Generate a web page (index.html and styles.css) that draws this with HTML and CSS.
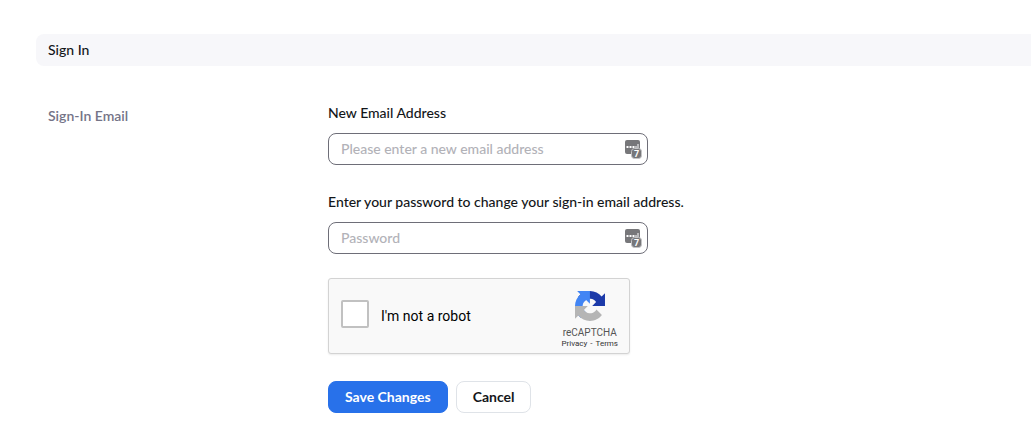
FILE: index.html
```html
<!DOCTYPE html>
<html lang="en">
<head>
<meta charset="utf-8">
<meta name="viewport" content="width=device-width, initial-scale=1">
<title>Sign In</title>
<link rel="stylesheet" href="styles.css">
</head>
<body>
<main class="page">
  <h1 class="section-title">Sign In</h1>
  <section class="setting">
    <h2 class="setting-name">Sign-In Email</h2>
    <form class="form">
      <div class="field">
        <label class="label" for="email">New Email Address</label>
        <div class="input-wrap">
          <input class="input" id="email" type="email" placeholder="Please enter a new email address">
          <svg class="manager" viewBox="0 0 17 19" aria-hidden="true">
            <rect class="manager-body" x="0" y="0" width="15" height="14" rx="2"/>
            <path class="manager-dots" d="M1.500 6h2v2h-2zM4.500 6h2v2h-2zM7.500 6h2v2h-2zM10.500 6h1v2h-1zM12.500 4h1v4h-1z"/>
            <rect class="manager-badge" x="6.500" y="8.500" width="10" height="10" rx="3"/>
            <text class="manager-count" x="11.500" y="17">7</text>
          </svg>
        </div>
      </div>
      <div class="field">
        <label class="label" for="password">Enter your password to change your sign-in email address.</label>
        <div class="input-wrap">
          <input class="input" id="password" type="password" placeholder="Password">
          <svg class="manager" viewBox="0 0 17 19" aria-hidden="true">
            <rect class="manager-body" x="0" y="0" width="15" height="14" rx="2"/>
            <path class="manager-dots" d="M1.500 6h2v2h-2zM4.500 6h2v2h-2zM7.500 6h2v2h-2zM10.500 6h1v2h-1zM12.500 4h1v4h-1z"/>
            <rect class="manager-badge" x="6.500" y="8.500" width="10" height="10" rx="3"/>
            <text class="manager-count" x="11.500" y="17">7</text>
          </svg>
        </div>
      </div>
      <div class="captcha">
        <input class="captcha-check" id="robot" type="checkbox">
        <label class="captcha-label" for="robot">I'm not a robot</label>
        <div class="captcha-brand">
          <svg class="captcha-logo" viewBox="0 0 64 64" aria-hidden="true">
            <path fill="#1c3aa9" d="M64 31.955l-.033-1.37V4.687l-7.16 7.16C50.948 4.674 42.033.093 32.05.093c-10.4 0-19.622 4.96-25.458 12.64l11.736 11.86a15.55 15.55 0 0 1 4.754-5.334c2.05-1.6 4.952-2.906 8.968-2.906.485 0 .86.057 1.135.163 4.976.393 9.288 3.14 11.828 7.124l-8.307 8.307L64 31.953"/>
            <path fill="#4285f4" d="M31.862.094l-1.37.033H4.594l7.16 7.16C4.58 13.147 0 22.06 0 32.046c0 10.4 4.96 19.622 12.64 25.458L24.5 45.768a15.55 15.55 0 0 1-5.334-4.754c-1.6-2.05-2.906-4.952-2.906-8.968 0-.485.057-.86.163-1.135.393-4.976 3.14-9.288 7.124-11.828l8.307 8.307L31.86.095"/>
            <path fill="#b5b5b5" d="M.001 32.045l.033 1.37v25.898l7.16-7.16c5.86 7.173 14.774 11.754 24.76 11.754 10.4 0 19.622-4.96 25.458-12.64l-11.736-11.86a15.55 15.55 0 0 1-4.754 5.334c-2.05 1.6-4.952 2.906-8.968 2.906-.485 0-.86-.057-1.135-.163-4.976-.393-9.288-3.14-11.828-7.124l8.307-8.307c-10.522.04-22.4.066-27.295-.005"/>
          </svg>
          <span class="captcha-name">reCAPTCHA</span>
          <span class="captcha-links"><a href="#privacy">Privacy</a><span>-</span><a href="#terms">Terms</a></span>
        </div>
      </div>
      <div class="actions">
        <button class="button button-primary" type="submit">Save Changes</button>
        <button class="button" type="button">Cancel</button>
      </div>
    </form>
  </section>
</main>
</body>
</html>
```
FILE: styles.css
```css
* {
  box-sizing: border-box;
}

body {
  margin: 0;
  background: #fff;
  color: #131619;
  font: 500 14px/20px Lato, "Open Sans", sans-serif;
}

.page {
  padding: 34px 0 28px 36px;
}

.section-title {
  margin: 0;
  padding: 6px 12px;
  border-radius: 8px 0 0 8px;
  background: #f7f7fa;
  font-size: 14px;
  font-weight: 500;
}

.setting {
  display: grid;
  grid-template-columns: 280px minmax(0, 1fr);
  padding: 37px 12px 0;
}

.setting-name {
  margin: 0;
  padding-top: 3px;
  color: #747487;
  font-size: 14px;
  font-weight: 600;
}

.form {
  display: flex;
  flex-direction: column;
  align-items: flex-start;
}

.field {
  margin-bottom: 27px;
}

.field + .captcha {
  margin-top: -3px;
}

.label {
  display: block;
  margin-bottom: 10px;
}

.input-wrap {
  position: relative;
  width: 320px;
  max-width: 100%;
}

.input {
  display: block;
  width: 100%;
  height: 32px;
  padding: 0 40px 2px 12px;
  border: 1px solid #6e6e78;
  border-radius: 8px;
  background: #fff;
  color: inherit;
  font: inherit;
}

.input::placeholder {
  color: #b2b2b8;
  opacity: 1;
}

.manager {
  position: absolute;
  top: 7px;
  right: 6px;
  width: 17px;
  height: 19px;
}

.manager-body {
  fill: #77777a;
}

.manager-dots {
  fill: #fff;
}

.manager-badge {
  fill: #77777a;
  stroke: #c4c4c6;
  stroke-width: 1px;
}

.manager-count {
  fill: #fff;
  font: 700 9px Roboto, sans-serif;
  text-anchor: middle;
}

.captcha {
  display: flex;
  align-items: center;
  width: 302px;
  max-width: 100%;
  height: 76px;
  padding: 0 11px 0 12px;
  border: 1px solid #d3d3d3;
  border-radius: 3px;
  background: #f9f9f9;
  box-shadow: 0 1px 2px rgba(0, 0, 0, 0.08);
  color: #000;
  font-family: Roboto, sans-serif;
  font-weight: 400;
}

.captcha-check {
  width: 28px;
  height: 28px;
  margin: 0 12px 4px 0;
  border: 2px solid #c1c1c1;
  border-radius: 2px;
  appearance: none;
  background: #fff;
}

.captcha-check:checked {
  background: #4285f4;
}

.captcha-brand {
  display: flex;
  flex-direction: column;
  align-items: center;
  margin-left: auto;
  padding-top: 7px;
  color: #555;
}

.captcha-logo {
  width: 30px;
  height: 30px;
}

.captcha-name {
  margin-top: 6px;
  font-size: 10px;
  line-height: 12px;
}

.captcha-links {
  display: flex;
  gap: 3px;
  color: #333;
  font-size: 8px;
  line-height: 10px;
}

.captcha-links a {
  color: inherit;
  text-decoration: none;
}

.actions {
  display: flex;
  gap: 8px;
  margin-top: 27px;
}

.button {
  height: 32px;
  padding: 0 16px;
  border: 1px solid #dfe3e8;
  border-radius: 8px;
  background: #fff;
  color: #131619;
  font: 700 14px/20px Lato, "Open Sans", sans-serif;
}

.button-primary {
  border-color: #2871ea;
  background: #2871ea;
  color: #fff;
}
```
